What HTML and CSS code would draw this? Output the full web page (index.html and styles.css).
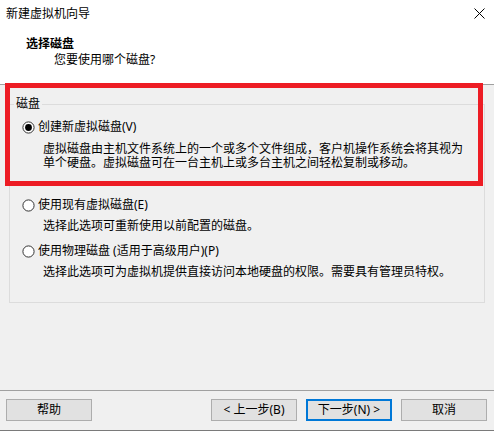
FILE: index.html
```html
<!DOCTYPE html>
<html lang="zh-CN">
<head>
<meta charset="utf-8">
<title>新建虚拟机向导</title>
<link rel="stylesheet" href="styles.css">
</head>
<body>
<div class="window">
  <div class="top">
    <div class="titlebar">
      <span class="title">新建虚拟机向导</span>
      <svg class="close" width="11" height="11" viewBox="0 0 11 11"><path d="M0.5 0.5 L10.5 10.5 M10.5 0.5 L0.5 10.5" stroke="#000" stroke-width="1" fill="none"/></svg>
    </div>
    <div class="header">
      <div class="h-title">选择磁盘</div>
      <div class="h-sub">您要使用哪个磁盘?</div>
    </div>
  </div>
  <div class="main">
    <fieldset class="group">
      <legend class="legend">磁盘</legend>
      <div class="option opt1">
        <svg class="radio" width="13" height="13" viewBox="0 0 13 13"><circle cx="6.5" cy="6.5" r="5.6" fill="#fff" stroke="#333" stroke-width="1"/><circle cx="6.5" cy="6.5" r="3.4" fill="#000"/></svg>
        <span>创建新虚拟磁盘(V)</span>
      </div>
      <div class="desc d1">
        <div class="line">虚拟磁盘由主机文件系统上的一个或多个文件组成，客户机操作系统会将其视为</div>
        <div class="line">单个硬盘。虚拟磁盘可在一台主机上或多台主机之间轻松复制或移动。</div>
      </div>
      <div class="option opt2">
        <svg class="radio" width="13" height="13" viewBox="0 0 13 13"><circle cx="6.5" cy="6.5" r="5.6" fill="#fff" stroke="#333" stroke-width="1"/></svg>
        <span>使用现有虚拟磁盘(E)</span>
      </div>
      <div class="desc">选择此选项可重新使用以前配置的磁盘。</div>
      <div class="option opt3">
        <svg class="radio" width="13" height="13" viewBox="0 0 13 13"><circle cx="6.5" cy="6.5" r="5.6" fill="#fff" stroke="#333" stroke-width="1"/></svg>
        <span>使用物理磁盘 (适用于高级用户)(P)</span>
      </div>
      <div class="desc d3">选择此选项可为虚拟机提供直接访问本地硬盘的权限。需要具有管理员特权。</div>
    </fieldset>
    <div class="highlight"></div>
  </div>
  <div class="footer">
    <button class="btn">帮助</button>
    <span class="spacer"></span>
    <button class="btn">&lt; 上一步(B)</button>
    <button class="btn btn-default">下一步(N) &gt;</button>
    <button class="btn">取消</button>
  </div>
</div>
</body>
</html>
```
FILE: styles.css
```css
* { box-sizing: border-box; }
html, body { margin: 0; padding: 0; }
body {
  width: 494px;
  height: 431px;
  background: #f0f0f0;
  font-family: "Noto Sans", "Noto Sans CJK SC", sans-serif;
  font-size: 12px;
  color: #000;
  overflow: hidden;
}
.window {
  position: relative;
  width: 494px;
  height: 431px;
  display: flex;
  flex-direction: column;
}
.top {
  background: #fff;
  height: 85px;
  border-bottom: 1px solid #a0a0a0;
}
.titlebar {
  height: 28px;
  display: flex;
  align-items: center;
  justify-content: space-between;
  padding: 0 9px 0 6px;
}
.title { line-height: 28px; }
.close { margin-top: -2px; }
.header { padding-top: 8px; }
.h-title {
  font-weight: bold;
  line-height: 16px;
  padding-left: 26px;
}
.h-sub {
  line-height: 16px;
  padding-left: 54px;
}
.main {
  position: relative;
  flex: 1;
}
.group {
  margin: 12px 0 0 9px;
  width: 476px;
  border: 1px solid #dcdcdc;
  padding: 8px 0 23px 0;
  min-width: 0;
}
.legend {
  margin-left: 4px;
  padding: 0 2px;
  line-height: 14px;
  height: 14px;
}
.option {
  display: flex;
  align-items: center;
  gap: 3px;
  height: 16px;
  padding-left: 12px;
  line-height: 16px;
}
.opt2 { margin-top: 27px; }
.opt3 { margin-top: 10px; }
.desc {
  margin-top: 6px;
  padding-left: 33px;
  line-height: 14px;
  white-space: nowrap;
}
.d1 {
  margin-top: 7px;
  font-family: "Liberation Sans", "Noto Sans CJK SC", sans-serif;
}
.d1 .line { line-height: 14px; height: 14px; }
.highlight {
  position: absolute;
  left: 5px;
  top: -2px;
  width: 478px;
  height: 103px;
  border: 5px solid #ed1c24;
  pointer-events: none;
}
.footer {
  height: 41px;
  border-top: 1px solid #a0a0a0;
  border-bottom: 1px solid #7a7a7a;
  display: flex;
  align-items: flex-start;
  padding: 8px 7px 0 6px;
  gap: 9px;
}
.spacer { flex: 1; }
.btn {
  width: 86px;
  height: 22px;
  background: #e1e1e1;
  border: 1px solid #adadad;
  font-family: "Noto Sans", "Noto Sans CJK SC", sans-serif;
  font-size: 12px;
  color: #000;
  padding: 0;
  line-height: 18px;
  margin: 0;
}
.btn-default {
  border: 2px solid #0078d7;
}
```
